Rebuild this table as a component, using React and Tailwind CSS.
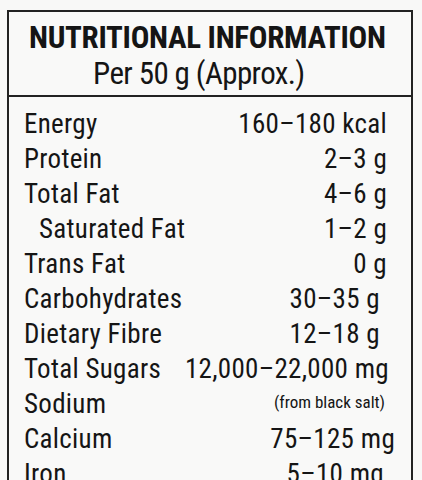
const rows = [
    { label: "Energy", value: "160–180 kcal", pr: "pr-[24px]" },
    { label: "Protein", value: "2–3 g", pr: "pr-[24px]" },
    { label: "Total Fat", value: "4–6 g", pr: "pr-[24px]" },
    { label: "Saturated Fat", value: "1–2 g", pr: "pr-[24px]", indent: true },
    { label: "Trans Fat", value: "0 g", pr: "pr-[24px]" },
    { label: "Carbohydrates", value: "30–35 g", pr: "pr-[31px]" },
    { label: "Dietary Fibre", value: "12–18 g", pr: "pr-[31px]" },
    { label: "Total Sugars", value: "12,000–22,000 mg", pr: "pr-[22px]" },
    { label: "Sodium", value: "(from black salt)", pr: "pr-[26px]", small: true },
    { label: "Calcium", value: "75–125 mg", pr: "pr-[16px]" },
    { label: "Iron", value: "5–10 mg", pr: "pr-[27px]" },
];

export default function App() {
    return (
        <div className="h-[480px] w-[422px] overflow-hidden bg-[#f8f8f7] pl-[7px] pt-[10px] font-['Roboto',sans-serif] font-stretch-[85%] text-[#151515]">
            <div className="w-[406px] border-2 border-[#222] bg-[#f9f9f8]">
                <div className="border-b-2 border-[#222] pb-[3px] pt-[8px]">
                    <h1 className="pl-[20px] text-[31px] font-bold leading-[36px] tracking-[-0.3px]">
                        NUTRITIONAL INFORMATION
                    </h1>
                    <p className="pl-[84px] text-[31px] leading-[36px] tracking-[-0.6px]">
                        Per 50 g (Approx.)
                    </p>
                </div>

                <div className="pt-[10px]">
                    {rows.map((row) => (
                        <div
                            key={row.label}
                            className={`flex h-[35px] items-center justify-between pl-[15px] text-[27px] leading-[35px] tracking-[0.3px] ${row.pr}`}
                        >
                            <span className={row.indent ? "pl-[15px]" : ""}>{row.label}</span>
                            {row.small ? (
                                <span className="pb-[4px] text-[17px] tracking-normal">{row.value}</span>
                            ) : (
                                <span>{row.value}</span>
                            )}
                        </div>
                    ))}
                </div>
            </div>
        </div>
    );
}
